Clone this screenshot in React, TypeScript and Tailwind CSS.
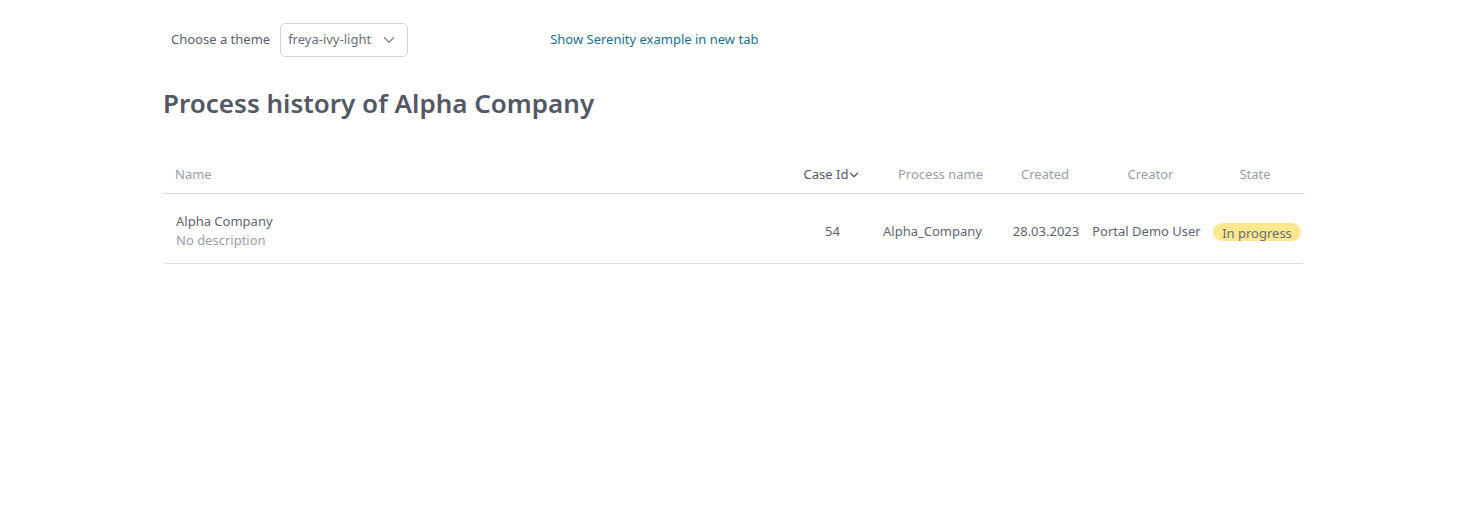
import { ChevronDown } from 'lucide-react'

const cols = 'grid grid-cols-[627px_83px_127px_90px_117px_98px]'

export default function App() {
    return (
        <div className="min-h-screen bg-white font-['Noto_Sans',sans-serif] text-[#5f6470]">
            <div className="ml-[163px] w-[1142px] pt-[23px]">
                <div className="flex items-center pl-[8px]">
                    <span className="text-[13px] text-[#5c606b]">Choose a theme</span>
                    <div className="ml-[10px] flex h-[34px] w-[128px] items-center justify-between rounded-[5px] border border-[#d3d5da] pl-[7px] pr-[9px]">
                        <span className="text-[13px] text-[#6b6f79]">freya-ivy-light</span>
                        <ChevronDown size={18} strokeWidth={1.6} className="text-[#7a7e87]" />
                    </div>
                    <a className="ml-[142px] text-[13px] text-[#1e6f8c]">Show Serenity example in new tab</a>
                </div>

                <h1 className="mt-[29px] text-[26px] font-semibold leading-[34px] text-[#535865]">Process history of Alpha Company</h1>

                <div className="mt-[36px]">
                    <div className={`${cols} h-[38px] items-center border-b border-[#dcdde0] text-[13px] text-[#9a9ea6]`}>
                        <div className="pl-[12px]">Name</div>
                        <div className="flex items-center justify-center pl-[2px] text-[#545966]">
                            Case Id
                            <ChevronDown size={14} strokeWidth={2.2} className="-ml-[1px]" />
                        </div>
                        <div className="pl-[8px] text-center">Process name</div>
                        <div className="text-center">Created</div>
                        <div className="pl-[4px] text-center">Creator</div>
                        <div className="pr-[2px] text-center">State</div>
                    </div>
                    <div className={`${cols} ml-[1px] h-[70px] w-[1139px] items-center border-b border-[#dcdde0] pt-[6px] text-[13px] text-[#5f6470]`}>
                        <div className="pb-[2px] pl-[12px] leading-[19px]">
                            <div>Alpha Company</div>
                            <div className="text-[#9a9ea6]">No description</div>
                        </div>
                        <div className="text-center">54</div>
                        <div className="pr-[10px] text-center">Alpha_Company</div>
                        <div className="text-center">28.03.2023</div>
                        <div className="pr-[6px] text-center whitespace-nowrap">Portal Demo User</div>
                        <div className="flex justify-center">
                            <span className="h-[18px] overflow-hidden rounded-full bg-[#fde78f] px-[9px] pt-[1px] text-[13px] leading-[18px] text-[#6b6f79]">In progress</span>
                        </div>
                    </div>
                </div>
            </div>
        </div>
    )
}
